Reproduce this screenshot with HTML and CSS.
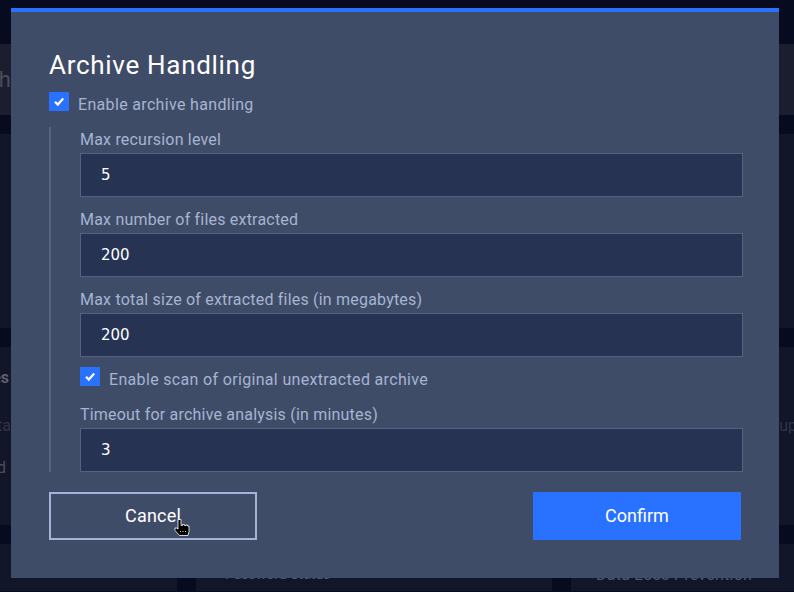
FILE: index.html
```html
<!DOCTYPE html>
<html lang="en">
<head>
<meta charset="UTF-8">
<meta name="viewport" content="width=device-width, initial-scale=1.0">
<title>Archive Handling</title>
<link rel="stylesheet" href="styles.css">
</head>
<body>

<div class="backdrop">
  <div class="page-header"><span class="page-title">Search</span></div>

  <div class="card card-left"></div>
  <div class="card"></div>
  <div class="card"></div>

  <div class="card card-left">
    <div class="card-lines">
      <span class="line-strong">Archives</span>
      <span class="line-dim">Metadata</span>
      <span class="line-mid">Extracted</span>
    </div>
  </div>
  <div class="card"></div>
  <div class="card card-right"><span class="line-dim">Group</span></div>

  <div class="card"></div>
  <div class="card card-title">Password Status</div>
  <div class="card card-title card-title-right">Data Loss Prevention</div>
</div>

<div class="dialog">
  <h1 class="dialog-title">Archive Handling</h1>

  <label class="check-row check-row-main">
    <span class="check-box"><svg viewBox="0 0 20 19" width="20" height="19"><path d="M6 9.800l2.800 2.800 5.400-6" fill="none" stroke="#fff" stroke-width="2.200"/></svg></span>
    <span class="check-text">Enable archive handling</span>
  </label>

  <div class="nested">
    <div class="field">
      <label class="field-label" for="recursion">Max recursion level</label>
      <input class="field-input" id="recursion" type="text" value="5">
    </div>
    <div class="field">
      <label class="field-label" for="files">Max number of files extracted</label>
      <input class="field-input" id="files" type="text" value="200">
    </div>
    <div class="field">
      <label class="field-label" for="size">Max total size of extracted files (in megabytes)</label>
      <input class="field-input" id="size" type="text" value="200">
    </div>
    <label class="check-row check-row-sub">
      <span class="check-box"><svg viewBox="0 0 20 19" width="20" height="19"><path d="M6 9.800l2.800 2.800 5.400-6" fill="none" stroke="#fff" stroke-width="2.200"/></svg></span>
      <span class="check-text">Enable scan of original unextracted archive</span>
    </label>
    <div class="field field-last">
      <label class="field-label" for="timeout">Timeout for archive analysis (in minutes)</label>
      <input class="field-input" id="timeout" type="text" value="3">
    </div>
  </div>

  <div class="dialog-footer">
    <button class="btn btn-cancel">Cancel</button>
    <button class="btn btn-confirm">Confirm</button>
  </div>
</div>

<svg class="cursor" viewBox="0 0 16 17" width="16" height="17">
  <path d="M4 .5h3v6h1.500v-1h2v1h1.500v-.5h1.500v1h1.500v5.500l-1 4h-8.500l-4.500-5v-2.500h2.500v1h.5z" fill="#000" stroke="#fff" stroke-width=".8"/>
  <path d="M6 12.500h1M8.500 12.500h1M11 12.500h1" stroke="#ddd" stroke-width="1"/>
</svg>

</body>
</html>
```

FILE: styles.css
```css
html, body {
  height: 100%;
}
body {
  font-family: Roboto, 'Liberation Sans', sans-serif;
  background-color: #060b1f;
  margin: 0;
  overflow: hidden;
}

/* page behind the dialog */
.backdrop {
  display: grid;
  grid-template-columns: 177px 356px 223px;
  grid-template-rows: 71px 194px 178px 47px;
  column-gap: 19px;
  row-gap: 19px;
  padding-top: 44px;
}
.page-header {
  grid-column: 1 / -1;
  background-color: #1a1e2e;
  display: flex;
  align-items: center;
  justify-content: flex-end;
  padding-right: 821px;
  height: 71px;
  margin-right: -38px;
}
.page-title {
  font-size: 22px;
  color: #4a4d59;
}
.card {
  background-color: #111628;
  overflow: hidden;
}
.card-left {
  display: flex;
  justify-content: flex-end;
  padding-right: 166px;
}
.card-lines {
  display: flex;
  flex-direction: column;
  align-items: flex-end;
  font-size: 16px;
  padding-top: 21px;
}
.card-right {
  margin-right: -38px;
  padding: 69px 0 0 183px;
  font-size: 16px;
}
.line-strong {
  color: #5c5f6d;
  font-weight: 700;
  margin-right: 2px;
}
.line-mid {
  color: #4c4e5a;
  margin: 23px 5px 0 0;
}
.line-dim {
  color: #2e3348;
}
.card-lines .line-dim {
  margin-top: 29px;
}
.card-title {
  color: #55596a;
  font-size: 14px;
  padding: 22px 0 0 29px;
  white-space: nowrap;
}
.card-title-right {
  margin-right: -38px;
  padding-left: 25px;
  font-size: 16px;
  padding-top: 21px;
  letter-spacing: .25px;
}

/* dialog */
.dialog {
  position: absolute;
  top: 8px;
  left: 11px;
  width: 768px;
  height: 570px;
  box-sizing: border-box;
  background-color: #3f4c67;
  border-top: 4px solid #2972ff;
  padding: 34px 36px 0 38px;
}
.dialog-title {
  margin: 0;
  font-size: 26px;
  font-weight: 400;
  line-height: 38px;
  letter-spacing: .7px;
  color: #fff;
}
.check-row {
  display: flex;
  align-items: center;
  gap: 9px;
  height: 19px;
  font-size: 16px;
  letter-spacing: .33px;
  color: #a6b4d2;
}
.check-row-main {
  margin-top: 8px;
}
.check-row-sub {
  margin-bottom: 16px;
}
.check-text {
  padding-top: 5px;
}
.check-box {
  width: 20px;
  height: 19px;
  background-color: #2972ff;
  flex: none;
}
.check-box svg {
  display: block;
}
.nested {
  margin-top: 16px;
  border-left: 2px solid #5a6582;
  padding-left: 29px;
}
.field {
  margin-bottom: 10px;
}
.field-last {
  margin-bottom: 0;
}
.field-label {
  display: block;
  font-size: 16px;
  line-height: 26px;
  letter-spacing: .2px;
  color: #a6b4d2;
}
.field-input {
  display: block;
  width: 100%;
  height: 44px;
  box-sizing: border-box;
  background-color: #273353;
  border: 1px solid #556180;
  padding: 0 20px;
  font-family: 'DejaVu Sans', sans-serif;
  font-size: 15px;
  color: #fff;
}
.dialog-footer {
  display: flex;
  justify-content: space-between;
  margin: 20px 2px 0 0;
}
.btn {
  width: 208px;
  height: 48px;
  box-sizing: border-box;
  padding-bottom: 3px;
  font-family: Roboto, 'Liberation Sans', sans-serif;
  font-size: 18px;
  color: #fff;
  border-radius: 0;
}
.btn-cancel {
  background-color: transparent;
  border: 2px solid #a3b4d6;
  letter-spacing: .2px;
}
.btn-confirm {
  background-color: #2972ff;
  border: none;
}
.cursor {
  position: absolute;
  left: 174px;
  top: 519px;
}
```
